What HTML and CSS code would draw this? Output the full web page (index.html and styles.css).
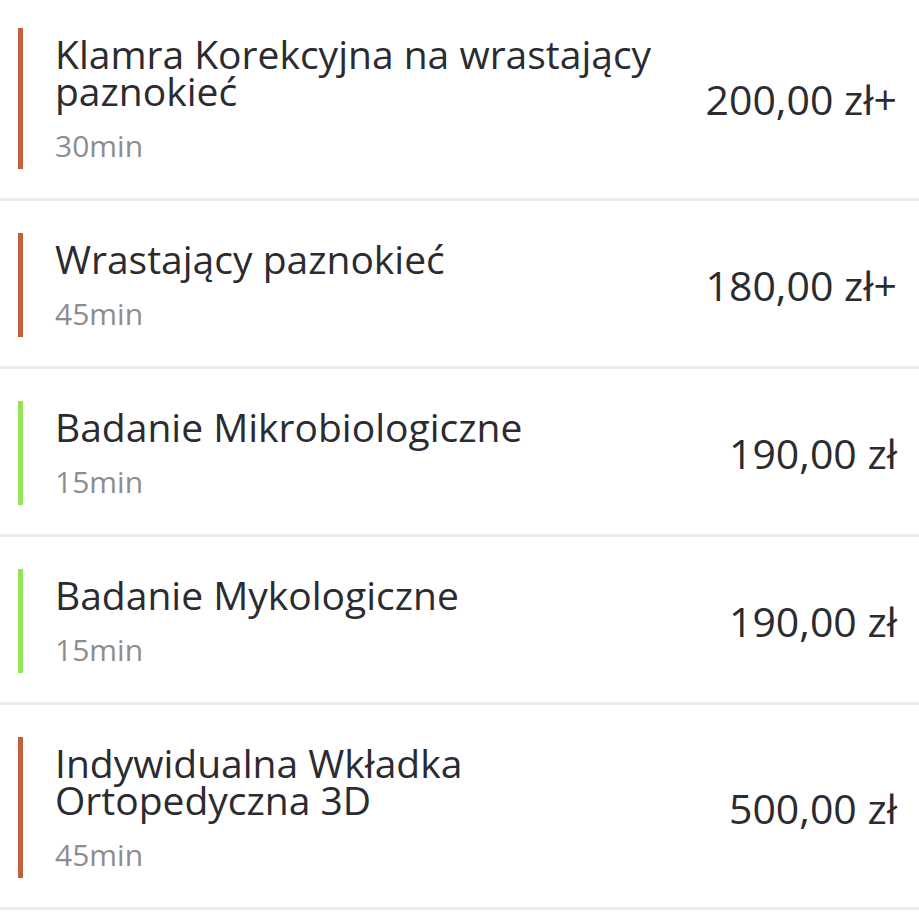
FILE: index.html
```html
<!DOCTYPE html>
<html lang="pl">
<head>
<meta charset="utf-8">
<title>Usługi</title>
<link rel="stylesheet" href="styles.css">
</head>
<body>
<ul class="services">
  <li class="service">
    <div class="info accent-orange">
      <div class="title">Klamra Korekcyjna na wrastający paznokieć</div>
      <div class="duration">30min</div>
    </div>
    <div class="price">200,00 zł+</div>
  </li>
  <li class="service">
    <div class="info accent-orange">
      <div class="title">Wrastający paznokieć</div>
      <div class="duration">45min</div>
    </div>
    <div class="price">180,00 zł+</div>
  </li>
  <li class="service">
    <div class="info accent-green">
      <div class="title">Badanie Mikrobiologiczne</div>
      <div class="duration">15min</div>
    </div>
    <div class="price">190,00 zł</div>
  </li>
  <li class="service">
    <div class="info accent-green">
      <div class="title">Badanie Mykologiczne</div>
      <div class="duration">15min</div>
    </div>
    <div class="price">190,00 zł</div>
  </li>
  <li class="service">
    <div class="info accent-orange">
      <div class="title">Indywidualna Wkładka Ortopedyczna 3D</div>
      <div class="duration">45min</div>
    </div>
    <div class="price">500,00 zł</div>
  </li>
</ul>
</body>
</html>
```
FILE: styles.css
```css
html, body {
  margin: 0;
  padding: 0;
  background: #ffffff;
}

body {
  font-family: "Open Sans", "Noto Sans", sans-serif;
  color: #2b2b30;
  overflow: hidden;
}

.services {
  list-style: none;
  margin: -4px 0 0 0;
  padding: 0;
}

.service {
  display: flex;
  align-items: center;
  gap: 24px;
  padding: 32px 22px 29px 18px;
  border-bottom: 3px solid #ececec;
}

.info {
  flex: 1;
  min-width: 0;
  border-left: 5px solid #c2603b;
  padding: 7px 0 6px 32px;
}

.accent-orange { border-left-color: #c2603b; }
.accent-green { border-left-color: #94e45a; }

.title {
  font-size: 39px;
  line-height: 37px;
  max-width: 620px;
}

.duration {
  margin-top: 20px;
  font-size: 30px;
  line-height: 34px;
  color: #8d8d8d;
}

.price {
  font-size: 41px;
  line-height: 40px;
  white-space: nowrap;
}
```
